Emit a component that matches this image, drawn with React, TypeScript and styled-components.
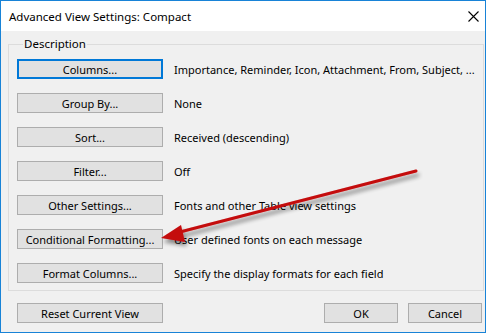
import React from "react";
import styled, { createGlobalStyle } from "styled-components";

const GlobalStyle = createGlobalStyle`
    html, body {
        margin: 0;
        padding: 0;
        background: #ffffff;
    }
    body {
        font-family: "Noto Sans", "Open Sans", sans-serif;
        font-size: 11px;
        color: #000000;
    }
`;

const rows = [
    { button: "Columns...", text: "Importance, Reminder, Icon, Attachment, From, Subject, ...", focused: true },
    { button: "Group By...", text: "None" },
    { button: "Sort...", text: "Received (descending)" },
    { button: "Filter...", text: "Off" },
    { button: "Other Settings...", text: "Fonts and other Table view settings" },
    { button: "Conditional Formatting...", text: "User defined fonts on each message" },
    { button: "Format Columns...", text: "Specify the display formats for each field" },
];

const CloseIcon = () => (
    <svg width="11" height="11" viewBox="0 0 11 11">
        <path d="M0.5 0.5 L10.5 10.5 M10.5 0.5 L0.5 10.5" stroke="#000" strokeWidth="1.1" fill="none" />
    </svg>
);

const Arrow = () => (
    <ArrowLayer width="489" height="334" viewBox="0 0 489 334">
        <defs>
            <filter id="shadow" x="-10%" y="-50%" width="120%" height="200%">
                <feGaussianBlur in="SourceAlpha" stdDeviation="2" />
                <feOffset dx="2" dy="4" result="blur" />
                <feComponentTransfer>
                    <feFuncA type="linear" slope="0.45" />
                </feComponentTransfer>
                <feMerge>
                    <feMergeNode />
                    <feMergeNode in="SourceGraphic" />
                </feMerge>
            </filter>
        </defs>
        <g filter="url(#shadow)">
            <line x1="416" y1="171" x2="176" y2="233" stroke="#c4090b" strokeWidth="3" strokeLinecap="round" />
            <polygon points="161,238 181,225 185,242" fill="#c4090b" />
        </g>
    </ArrowLayer>
);

const App = () => {
    return (
        <>
            <GlobalStyle />
            <Window>
                <TitleBar>
                    <Title>Advanced View Settings: Compact</Title>
                    <Close>
                        <CloseIcon />
                    </Close>
                </TitleBar>
                <Body>
                    <Group>
                        <Legend>Description</Legend>
                        <List>
                            {rows.map((row) => (
                                <Row key={row.button}>
                                    <Button $focused={row.focused}>{row.button}</Button>
                                    <Label>{row.text}</Label>
                                </Row>
                            ))}
                        </List>
                    </Group>
                    <Footer>
                        <Button>Reset Current View</Button>
                        <Actions>
                            <Button $small>OK</Button>
                            <Button $small>Cancel</Button>
                        </Actions>
                    </Footer>
                </Body>
                <Arrow />
            </Window>
        </>
    );
};

const Window = styled.div`
    position: relative;
    width: 484px;
    height: 331px;
    border: 1px solid #1883d7;
    background-color: #f0f0f0;
    display: flex;
    flex-direction: column;
`;

const TitleBar = styled.div`
    height: 30px;
    background-color: #ffffff;
    display: flex;
    align-items: center;
    justify-content: space-between;
    padding: 0 0 0 8px;
`;

const Title = styled.span`
    font-size: 11.5px;
    color: #000000;
`;

const Close = styled.div`
    width: 24px;
    display: flex;
    justify-content: center;
    align-items: center;
`;

const Body = styled.div`
    padding: 5px 3px 0 7px;
    display: flex;
    flex-direction: column;
`;

const Group = styled.fieldset`
    margin: 0;
    padding: 7px 8px 7px 8px;
    width: 474px;
    box-sizing: border-box;
    border: 1px solid #dcdcdc;
`;

const Legend = styled.legend`
    padding: 0 1px;
    margin-left: 6px;
    line-height: 16px;
    font-size: 11.5px;
`;

const List = styled.div`
    display: flex;
    flex-direction: column;
    gap: 14px;
`;

const Row = styled.div`
    display: flex;
    align-items: center;
    gap: 11px;
`;

const Button = styled.button<{ $focused?: boolean; $small?: boolean }>`
    width: ${(p) => (p.$small ? "74px" : "146px")};
    height: 20px;
    box-sizing: border-box;
    padding: 0;
    background-color: #e1e1e1;
    border: ${(p) => (p.$focused ? "2px solid #0078d7" : "1px solid #adadad")};
    font-family: "Noto Sans", "Open Sans", sans-serif;
    font-size: 11px;
    color: #000000;
    line-height: 1;
`;

const Label = styled.span`
    font-size: 11px;
    white-space: nowrap;
`;

const Footer = styled.div`
    display: flex;
    justify-content: space-between;
    padding: 12px 0 0 9px;
    width: 474px;
    box-sizing: border-box;
`;

const Actions = styled.div`
    display: flex;
    gap: 10px;
`;

const ArrowLayer = styled.svg`
    position: absolute;
    left: -1px;
    top: -1px;
    pointer-events: none;
`;

export default App;
